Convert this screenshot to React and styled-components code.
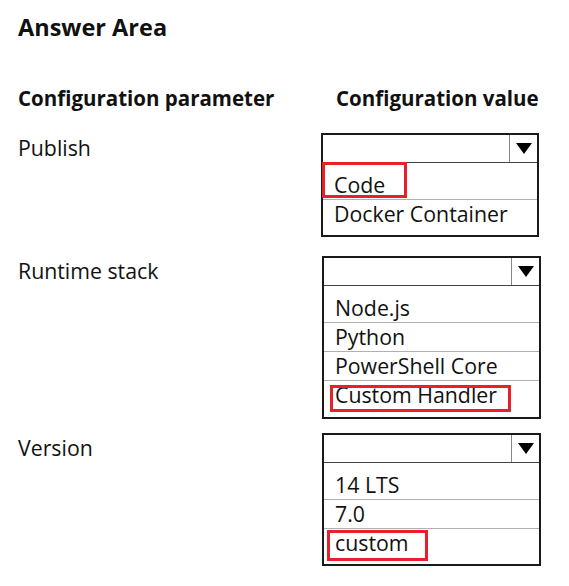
import React from "react";
import styled, { createGlobalStyle } from "styled-components";

const GlobalStyle = createGlobalStyle`
  html, body {
    margin: 0;
    padding: 0;
    background: #fff;
  }
  body {
    font-family: "Open Sans", "Noto Sans", sans-serif;
    color: #111;
  }
`;

const Page = styled.div`
  width: 569px;
  height: 586px;
  padding: 12px 0 0 18px;
  box-sizing: border-box;
`;

const Title = styled.h1`
  margin: 0;
  font-size: 23.5px;
  font-weight: 700;
  line-height: 30px;
`;

const Row = styled.div`
  display: grid;
  grid-template-columns: 304px 219px;
  align-items: start;
  margin-top: ${(p) => p.$gap || 0}px;
`;

const ColHead = styled.div`
  font-size: 20.5px;
  font-weight: 700;
  line-height: 30px;
  padding-left: ${(p) => p.$indent || 0}px;
`;

const Label = styled.div`
  font-size: 21.3px;
  line-height: 30px;
`;

const Box = styled.div`
  border: 2px solid #1a1a1a;
  width: ${(p) => p.$w}px;
  margin-left: ${(p) => p.$shift || 0}px;
  box-sizing: border-box;
`;

const Header = styled.div`
  display: flex;
  height: 28px;
  border-bottom: 1px solid #444;
  box-sizing: border-box;
`;

const Field = styled.div`
  flex: 1;
`;

const ArrowCell = styled.div`
  width: 27px;
  border-left: 1px solid #888;
  display: flex;
  align-items: center;
  justify-content: center;
`;

const Arrow = styled.div`
  width: 0;
  height: 0;
  border-left: 8px solid transparent;
  border-right: 8px solid transparent;
  border-top: 11px solid #000;
`;

const List = styled.div`
  padding: 8px 0 ${(p) => p.$bottom}px;
`;

const Option = styled.div`
  position: relative;
  height: 29px;
  line-height: 28px;
  font-size: 21.3px;
  padding-left: 11px;
  border-bottom: 1px solid #b0b0b0;
  box-sizing: border-box;
  &:last-child {
    border-bottom: none;
  }
`;

const Mark = styled.div`
  position: absolute;
  left: ${(p) => p.$x}px;
  top: ${(p) => p.$y}px;
  width: ${(p) => p.$w}px;
  height: ${(p) => p.$h}px;
  border: 3px solid #e8202a;
  box-sizing: border-box;
  pointer-events: none;
`;

const params = [
  {
    label: "Publish",
    gap: 20,
    width: 218,
    shift: -1,
    bottom: 6,
    options: ["Code", "Docker Container"],
    mark: { index: 0, x: -1, y: -9, w: 85, h: 36 },
  },
  {
    label: "Runtime stack",
    gap: 19,
    width: 219,
    shift: 0,
    bottom: 7,
    options: ["Node.js", "Python", "PowerShell Core", "Custom Handler"],
    mark: { index: 3, x: 6, y: 4, w: 181, h: 27 },
  },
  {
    label: "Version",
    gap: 14,
    width: 219,
    shift: 0,
    bottom: 6,
    options: ["14 LTS", "7.0", "custom"],
    mark: { index: 2, x: 3, y: 1, w: 101, h: 31 },
  },
];

function Dropdown({ item }) {
  return (
    <Box $w={item.width} $shift={item.shift}>
      <Header>
        <Field />
        <ArrowCell>
          <Arrow />
        </ArrowCell>
      </Header>
      <List $bottom={item.bottom}>
        {item.options.map((opt, i) => (
          <Option key={opt}>
            {opt}
            {item.mark.index === i ? (
              <Mark
                $x={item.mark.x}
                $y={item.mark.y}
                $w={item.mark.w}
                $h={item.mark.h}
              />
            ) : null}
          </Option>
        ))}
      </List>
    </Box>
  );
}

export default function App() {
  return (
    <>
      <GlobalStyle />
      <Page>
        <Title>Answer Area</Title>
        <Row $gap={41}>
          <ColHead>Configuration parameter</ColHead>
          <ColHead $indent={14}>Configuration value</ColHead>
        </Row>
        {params.map((item) => (
          <Row key={item.label} $gap={item.gap}>
            <Label>{item.label}</Label>
            <Dropdown item={item} />
          </Row>
        ))}
      </Page>
    </>
  );
}
